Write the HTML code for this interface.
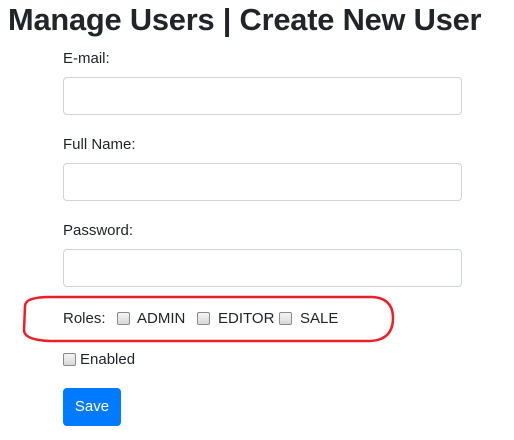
<!DOCTYPE html>
<html><head><style>
body{margin:0;width:514px;height:440px;background:#fff;font-family:"Liberation Sans",sans-serif;color:#212529;position:relative;overflow:hidden}
.a{position:absolute}
h1{position:absolute;left:8px;top:0px;margin:0;font-size:30.8px;font-weight:bold;line-height:40px;white-space:nowrap;letter-spacing:-0.2px}
.l{font-size:15px;line-height:20px}
.in{position:absolute;left:63px;width:397px;height:36px;border:1px solid #ced4da;border-radius:4px}
.cb{position:absolute;width:11px;height:11px;border:1px solid #8a8a8a;border-radius:2px;background:linear-gradient(#f4f4f4,#d8d8d8)}
</style></head><body>
<h1>Manage Users | Create New User</h1>
<div class="a l" style="left:63px;top:49px">E-mail:</div>
<div class="in" style="top:77px"></div>
<div class="a l" style="left:63px;top:135px">Full Name:</div>
<div class="in" style="top:163px"></div>
<div class="a l" style="left:63px;top:221px">Password:</div>
<div class="in" style="top:249px"></div>
<svg class="a" style="left:0;top:0" width="514" height="440"><path d="M25 306 Q25 297 50 297 L372 297 Q393 298 393 318 Q393 340 370 341 L50 341 Q24 340 24 330 Z" fill="none" stroke="#e8202a" stroke-width="2.5"/></svg>
<div class="a l" style="left:63px;top:309px">Roles:</div>
<div class="cb" style="left:117px;top:312px"></div>
<div class="a l" style="left:137px;top:309px">ADMIN</div>
<div class="cb" style="left:197px;top:312px"></div>
<div class="a l" style="left:218px;top:309px">EDITOR</div>
<div class="cb" style="left:279px;top:312px"></div>
<div class="a l" style="left:300px;top:309px">SALE</div>
<div class="cb" style="left:63px;top:353px"></div>
<div class="a l" style="left:80px;top:350px">Enabled</div>
<div class="a" style="left:63px;top:388px;width:58px;height:38px;background:#007bff;border-radius:4px;color:#fff;font-size:15px;line-height:38px;text-align:center">Save</div>
</body></html>
